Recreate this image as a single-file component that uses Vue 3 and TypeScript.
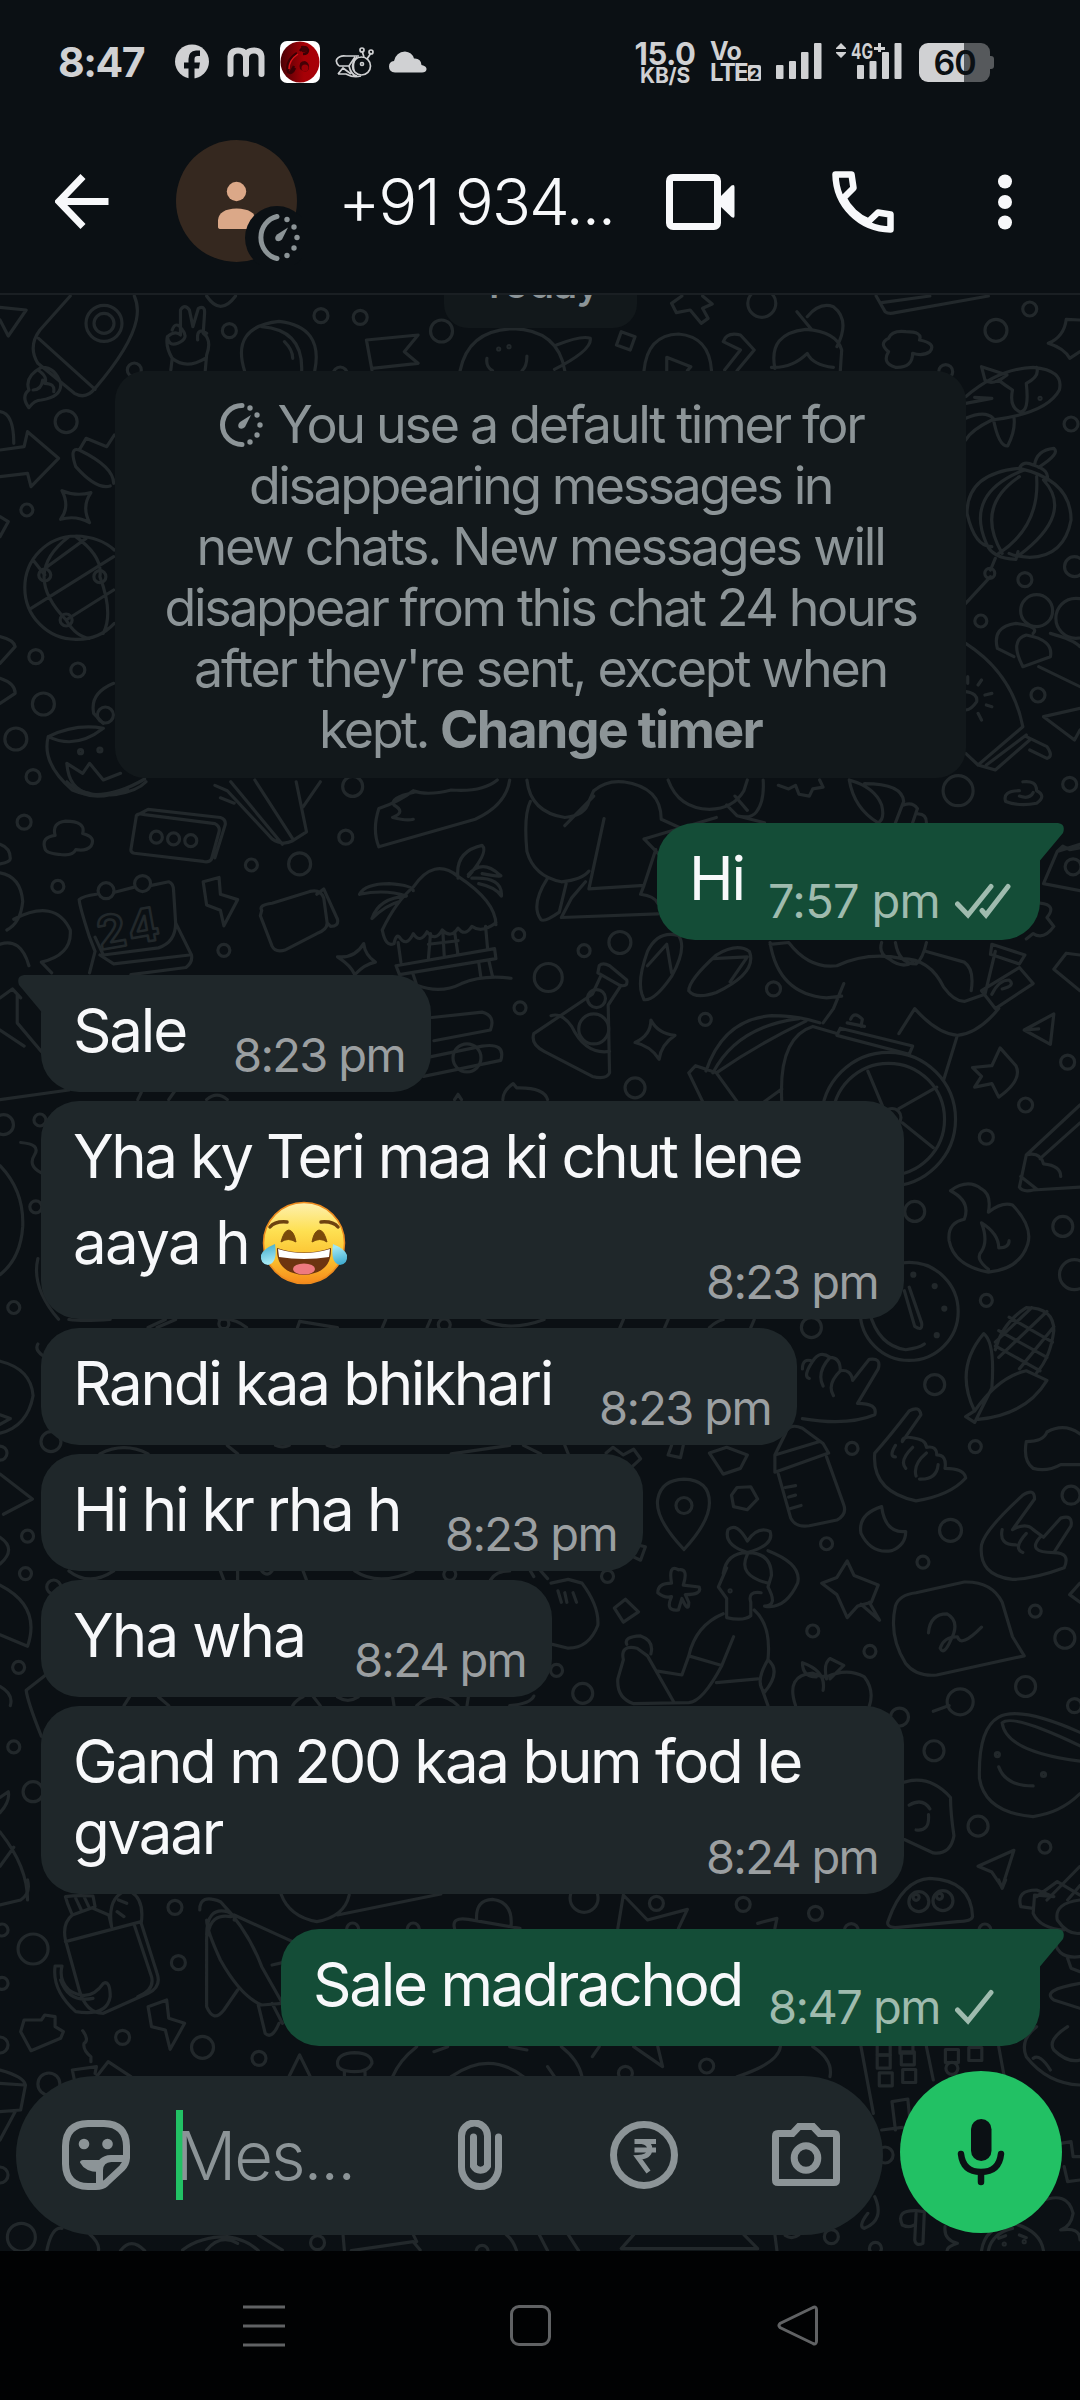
<script setup lang="ts">
interface Line { text: string; w: number; emoji?: boolean }
interface Message { out?: boolean; tail?: boolean; width: number; gap: number; lines: Line[]; time: string; ticks?: number }
type Dot = [number, number, number]
interface Sheet { y: number; sy: number; d: string; dots: Dot[] }

/* Spreads the tracking of a single-line text so that it fills the given advance width. */
const vFit = {
  mounted(el: HTMLElement, binding: { value: number }) {
    const count = (el.textContent ?? '').trim().length
    const natural = el.getBoundingClientRect().width
    if (count) el.style.letterSpacing = `${(binding.value - natural) / count}px`
  },
}

const notice: Line[] = [
  { text: 'disappearing messages in', w: 583 },
  { text: 'new chats. New messages will', w: 688 },
  { text: 'disappear from this chat 24 hours', w: 752 },
  { text: "after they're sent, except when", w: 693 },
]

const messages: Message[] = [
  { out: true, tail: true, width: 383, gap: 45, lines: [{ text: 'Hi', w: 55 }], time: '7:57 pm', ticks: 2 },
  { tail: true, width: 390, gap: 35, lines: [{ text: 'Sale', w: 113 }], time: '8:23 pm' },
  { width: 863, gap: 9, lines: [{ text: 'Yha ky Teri maa ki chut lene', w: 728 }, { text: 'aaya h', w: 176, emoji: true }], time: '8:23 pm' },
  { width: 756, gap: 9, lines: [{ text: 'Randi kaa bhikhari', w: 479 }], time: '8:23 pm' },
  { width: 602, gap: 9, lines: [{ text: 'Hi hi kr rha h', w: 327 }], time: '8:23 pm' },
  { width: 511, gap: 9, lines: [{ text: 'Yha wha', w: 232 }], time: '8:24 pm' },
  { width: 863, gap: 9, lines: [{ text: 'Gand m 200 kaa bum fod le', w: 728 }, { text: 'gvaar', w: 149 }], time: '8:24 pm' },
  { out: true, tail: true, width: 759, gap: 35, lines: [{ text: 'Sale madrachod', w: 429 }], time: '8:47 pm', ticks: 1 },
]

const SX = 0.68878
const windows: [number, number][] = [[1283, 545], [1318, 535], [1286, 598], [1320, 588], [1382, 528], [1416, 522], [1283, 505], [1316, 500]]

/* Wallpaper doodles, in four stacked sheets. */
const sheets: Sheet[] = [
  {
    y: 280, sy: 1 / 3,
    d: `M0 82L38 90L12 168L0 120 M102 48L58 150Q40 200 55 250L108 340Q125 360 138 325Q190 200 198 120Q202 80 195 48 M56 175L138 328
    M60 262Q35 290 42 330Q30 350 42 383Q50 360 60 360Q90 350 88 310Q80 260 60 262 M55 270Q70 290 65 310Q80 310 78 335 M48 330Q60 330 62 300
    M300 48Q320 110 342 48 M248 270L250 235Q240 200 243 170Q255 150 262 165L262 90Q268 70 275 90L280 140L288 85Q298 75 297 100L295 160Q308 180 300 225L298 272 M243 170Q245 200 258 190Q275 175 265 150Q255 120 250 150 M300 160Q285 140 287 180 M250 235Q270 270 298 235
    M355 272Q335 140 405 124Q470 140 457 272 M380 140Q440 150 438 272 M413 185Q425 210 425 235 M540 270L532 180L607 165L587 215L607 250L540 265
    M668 272Q680 150 745 146Q810 150 820 272 M808 195Q845 165 857 175Q860 210 805 268 M707 235Q705 260 715 272 M765 228Q765 260 758 272 M902 155L922 170L915 210L895 195Z
    M990 48L975 70L982 98L1002 90L1018 130L1028 115L1020 85L1034 72L1020 48 M935 272Q940 165 985 162Q1030 170 1033 272 M968 272L968 232L1003 260L998 272 M1052 270L1075 210L1050 185Q1055 155 1075 165L1095 210L1070 272
    M1125 265Q1115 160 1170 148Q1215 155 1222 210L1220 272 M1120 262Q1150 265 1172 220Q1180 255 1210 262 M1157 95L1178 148 M1172 110Q1190 65 1210 80Q1235 120 1215 200
    M1272 48L1285 95Q1290 103 1300 98L1435 48 M1280 68L1350 48 M1290 215Q1275 190 1290 175Q1295 150 1315 155Q1340 155 1335 180Q1360 190 1350 215Q1340 230 1325 220Q1325 265 1300 262Q1280 250 1290 215 M1568 120L1548 118Q1545 170 1522 190Q1545 205 1553 235L1568 215
    M1402 350Q1450 265 1500 262Q1545 270 1538 330Q1520 400 1440 420Q1410 450 1402 480 M1425 260L1462 285Q1440 320 1430 300Z M1402 370L1440 355L1415 352 M1505 262Q1510 290 1490 310Q1495 400 1480 395Q1465 380 1470 330Q1455 310 1450 300 M1402 415Q1430 390 1442 415Q1450 500 1463 498Q1475 450 1472 410
    M1480 565Q1404 580 1404 700Q1415 800 1440 800 M1480 565Q1555 600 1555 720Q1545 830 1495 832Q1475 830 1465 820 M1487 570Q1400 640 1432 790 M1480 590Q1415 680 1455 820 M1505 590Q1510 740 1450 820 M1515 600Q1560 700 1480 825 M1480 565Q1485 540 1500 555Q1525 570 1520 600 M1502 555Q1505 510 1530 505Q1540 520 1508 562 M1432 790Q1440 835 1475 838L1478 815 M1445 835L1438 870 M1438 890L1402 970
    M1448 1105Q1440 1040 1475 1030Q1510 1040 1500 1060 M1485 1160Q1465 1080 1490 1065Q1530 1080 1525 1130Z M1508 1160L1568 1220 M1525 1060Q1560 1080 1568 1100 M1448 1105L1472 1130
    M1402 1090Q1470 1180 1485 1340L1420 1455L1402 1420 M1432 1455L1490 1365 M1490 1370L1520 1400Q1530 1430 1520 1435L1495 1410 M1420 1455L1445 1470L1495 1380 M1402 1235Q1420 1240 1418 1265Q1410 1290 1402 1290 M1405 1190v20 M1425 1200l-5 15 M1440 1240l-10 5 M1440 1280l-8 -5 M1425 1320l-5 -20 M1568 1285L1515 1310L1560 1380L1568 1350
    M0 395Q20 400 20 490 M0 510L35 500L40 455L85 535L45 620L40 580L0 590 M166 465L155 500L125 475L115 510Q100 500 110 560Q140 630 160 618 M115 510Q165 560 165 610 M90 632Q110 650 132 638Q118 680 130 728Q110 705 88 718Q102 680 90 632Z M0 710L12 725L0 770
    M110 768A74 155 0 0 0 110 1078A74 155 0 0 0 166 1030 M110 768Q145 770 166 810 M100 770Q30 880 96 1020Q110 1070 130 1075 M62 870L125 775 M110 770Q150 830 145 890Q165 1000 150 1060 M45 985L165 830 M48 840L65 885 M96 1020L165 930
    M0 1070Q20 1080 22 1100L0 1150 M0 1195Q22 1210 22 1240L0 1270 M70 1370Q110 1330 150 1345 M70 1370Q110 1410 150 1345 M70 1370Q60 1450 105 1530Q150 1570 210 1497 M97 1450L120 1480L130 1450L150 1500L175 1480 M97 1450Q100 1530 130 1540 M165 1210Q130 1240 136 1300L150 1330`,
    dots: [[151, 130, 18], [151, 130, 10], [466, 107, 7], [523, 112, 7], [333, 152, 7], [641, 153, 11], [724, 207, 1], [739, 200, 1], [1106, 70, 14], [1446, 151, 11], [1495, 87, 7], [1510, 355, 1], [1437, 880, 5], [1488, 899, 7], [1505, 992, 16], [1424, 1023, 6], [1562, 1015, 20], [1555, 432, 7], [1560, 860, 10], [96, 425, 11], [39, 690, 6], [65, 885, 6], [145, 890, 6], [96, 1020, 6], [52, 1130, 7], [113, 1170, 7], [63, 1272, 11], [23, 1377, 11], [48, 1490, 7], [117, 1415, 2], [145, 1410, 2], [153, 1305, 8], [1507, 1245, 7], [195, 270, 7], [494, 282, 7], [1373, 275, 7]],
  },
  {
    y: 780, sy: 560 / 1568,
    d: `M97 5Q120 50 170 40Q200 30 212 5 M105 15Q130 70 185 25 M65 190Q60 160 80 155Q75 120 95 115Q125 115 120 150Q140 160 132 185Q125 200 110 195Q105 215 85 208Q65 205 65 190 M190 195L198 100Q200 92 210 97L312 122Q320 130 318 145L307 222Q303 232 295 228L195 205Q190 203 190 195 M198 100L215 82L320 105Q328 110 327 125L312 218
    M312 15L330 30L395 165Q410 185 425 170L445 145L430 5 M320 50L340 65 M335 5L410 180 M370 0L425 165 M465 5L440 75 M550 187Q540 140 550 80Q580 60 600 30Q620 45 655 28Q700 35 722 0 M740 0Q735 70 690 110L550 187 M600 35Q565 50 572 70Q590 90 570 105Q590 115 600 110
    M765 0Q770 90 820 105Q850 100 855 60L862 30Q880 0 905 5Q960 20 960 110L1000 145 M770 60Q760 100 765 200Q775 270 815 285Q845 280 855 255 M820 128L862 45 M877 108L855 305L935 295L930 320Q950 325 955 345 M935 165L1040 105 M935 165L955 205 M952 195L935 295 M850 285L830 330L815 385L955 375 M822 290L812 370Q790 400 785 390Q770 350 795 275 M1070 100L1110 120
    M970 0Q985 80 1030 82Q1065 80 1080 30L1085 0 M1055 70L1070 100Q1090 110 1098 90Q1110 60 1108 0 M1067 45L1085 85 M1130 15L1145 25L1155 15L1160 40L1175 45L1180 25L1195 20L1190 0 M1233 0Q1240 80 1275 120 M1233 0Q1270 20 1280 70Q1285 110 1275 120 M1255 10Q1310 10 1312 60L1300 120 M1312 70Q1325 60 1332 80L1325 120 M1333 95Q1345 95 1345 120
    M1480 30Q1455 30 1460 60Q1480 75 1505 65Q1520 45 1505 30Q1505 0 1485 5 M1480 45Q1495 55 1500 35 M522 320Q530 290 565 290Q600 295 600 310 M522 320Q560 305 590 325Q550 330 540 388Q560 350 580 340 M555 420Q575 340 600 300Q630 215 665 270Q720 340 720 405 M555 420Q560 470 572 458Q575 430 580 440Q590 470 600 430Q610 460 620 425Q632 455 642 420Q655 445 665 415Q675 440 685 410Q700 430 720 400
    M665 275Q660 200 700 183Q710 200 680 270 M680 265Q700 220 725 265Q735 275 700 262 M685 275Q730 270 728 325Q720 300 695 290 M578 455L582 510 M705 410L708 475 M625 430L622 500 M660 425L665 490 M643 425L645 495 M622 460L665 450 M575 520L718 472L720 500L580 545Z M695 510L698 550 M710 508L715 550 M600 545L605 575Q640 600 670 570Q700 545 742 555
    M115 335Q115 350 130 440L138 480L130 540 M115 335Q120 325 140 320 M165 315L195 300 M220 295L245 285Q252 290 252 310L255 400L278 490Q280 510 270 525L190 545 M145 490L165 515L275 490 M138 440L150 490L230 470Q255 455 255 400 M295 285L318 273L320 320L345 335L325 408L320 365L300 350Z M380 365Q375 350 395 345L450 312Q465 305 470 330L475 400Q475 420 460 430L415 475Q400 485 395 465L378 380Z M460 320L470 305L490 390Q492 410 480 410L475 400
    M528 458Q515 500 490 495Q510 520 515 545Q530 515 545 510Q530 490 528 458 M0 180Q15 190 15 220Q15 230 0 235 M0 260Q30 270 33 340Q30 400 10 420 M20 390Q80 330 102 420Q105 490 60 510L75 540 M0 460Q30 440 42 520 M0 610L18 585L30 610 M25 600L25 680L60 760 M0 700L35 745
    M932 600Q925 560 940 480Q955 420 985 435Q998 470 975 550Q950 620 935 615Z M940 520L968 460L975 540 M1000 590Q1000 560 1040 490Q1070 455 1088 480Q1100 540 1040 595Q1010 615 1000 590 M1035 500L1085 495L1060 565 M870 520Q875 510 885 520L910 560Q912 580 900 575L868 540Z M872 550L860 600L775 710Q770 740 790 760L860 830Q880 840 885 820L883 630L900 580 M800 660Q815 650 830 690Q850 770 885 760 M945 672Q955 710 980 715Q960 740 957 782Q945 745 922 735Q945 715 945 672Z
    M1118 455Q1130 600 1200 610L1222 605 M1225 570L1210 640L1195 680 M1118 460L1145 455Q1175 530 1215 520Q1260 480 1310 500Q1350 500 1370 580Q1385 620 1400 620L1430 600L1445 480 M1305 710L1328 640Q1360 710 1390 715Q1420 710 1450 640 M1390 715L1370 840 M1300 455Q1305 515 1330 515Q1340 500 1345 455 M1280 455Q1275 485 1290 500Q1310 530 1325 510 M1440 460L1488 490L1480 515L1438 488Z M1425 590L1480 525L1500 570L1445 640Z M1440 600Q1450 560 1465 560Q1475 575 1455 585 M1345 480L1400 510Q1415 530 1410 590
    M1260 815L1285 930 M1360 860L1305 920 M1355 1030L1310 960 M1220 695L1325 745L1320 768L1215 715Z M1230 680L1255 690 M1235 670Q1240 645 1252 670L1250 690 M1025 815Q1050 670 1120 660Q1160 660 1190 680 M1035 820Q1070 690 1160 668 M1000 820L1010 800L1040 820Q1100 740 1170 675 M1135 900Q1130 720 1180 690L1215 710 M1000 820L1020 900 M1040 820L1070 900 M1135 865L1110 900
    M1487 700L1530 655L1525 740Z M1487 700L1508 697 M1452 750L1475 800Q1485 840 1450 888L1440 850L1415 860L1425 830L1412 805L1440 800Z M1568 910L1490 1050L1480 1140Q1485 1155 1500 1148L1568 1140 M1490 1050Q1510 1040 1515 1075Q1540 1080 1540 1110 M1568 960L1510 1060 M1482 1110L1505 1145
    M1380 1150Q1405 1115 1425 1145Q1440 1160 1435 1210Q1455 1180 1470 1190Q1500 1250 1492 1300Q1480 1370 1435 1378Q1385 1360 1378 1290Q1375 1240 1400 1230Q1410 1180 1380 1150 M1435 1370Q1415 1340 1425 1320Q1435 1290 1425 1240Q1450 1270 1450 1310Q1465 1310 1465 1290 M1313 1430L1328 1530Q1340 1545 1338 1520L1320 1420
    M0 1080Q35 1150 33 1250Q30 1340 0 1385 M0 895L100 868 M55 1340Q45 1420 85 1510 M30 1015Q60 1020 50 1050Q40 1080 60 1100 M627 665L700 650Q720 660 712 700L630 730 M612 780L700 745Q735 735 727 785L615 830 M730 895Q730 870 745 850L750 862Q790 860 795 895 M660 895l5 -15l5 15
    M1515 290L1568 310 M1515 290L1535 200L1568 180 M1535 200l8 -15l10 10l15 -5 M1530 530L1548 485L1568 490 M1530 530L1568 590 M1510 345Q1535 350 1520 385L1530 410Q1515 450 1500 430L1490 445 M300 895Q315 870 330 895 M245 895l8 -22 M200 895l5 -20`,
    dots: [[35, 118, 7], [227, 160, 6], [252, 165, 6], [277, 170, 6], [512, 18, 10], [502, 160, 7], [1391, 30, 15], [154, 310, 8], [207, 290, 8], [365, 238, 6], [435, 235, 11], [84, 298, 6], [325, 477, 6], [753, 433, 6], [848, 478, 6], [900, 455, 11], [796, 553, 14], [755, 638, 6], [1123, 585, 7], [1024, 670, 6], [922, 862, 10], [866, 612, 9], [862, 697, 15], [1290, 950, 67], [1290, 950, 56], [1295, 945, 9], [1550, 790, 7], [1489, 910, 7], [1432, 1000, 7], [1328, 1208, 10], [1543, 1250, 10], [1560, 1385, 15], [1432, 1457, 6], [1320, 1488, 49], [5, 965, 10], [58, 952, 6], [52, 1195, 6], [20, 1477, 6], [678, 778, 14], [1326, 1385, 1.5], [1357, 1417, 1.5], [1371, 1480, 1.5], [1553, 12, 7], [1558, 243, 8]],
  },
  {
    y: 1300, sy: 600 / 1568,
    d: `M1262 30Q1275 120 1315 130Q1335 125 1342 115 M1415 290Q1385 180 1428 88Q1445 110 1440 230L1415 320L1402 305L1415 290Q1450 200 1490 185L1520 210Q1490 300 1420 312 M1445 130Q1455 60 1490 20Q1530 20 1530 80Q1525 150 1505 190 M1450 80L1520 150 M1445 120L1510 185 M1465 45L1528 110 M1520 30L1450 150 M1530 70L1480 180 M1498 20L1445 110
    M1165 180Q1165 150 1180 160Q1190 130 1205 150Q1220 150 1220 185Q1235 180 1238 210L1262 155Q1280 150 1275 180L1245 270Q1275 270 1270 300Q1230 330 1165 310 M1180 160Q1165 200 1175 205 M1205 150Q1185 190 1195 225 M1220 185Q1200 220 1210 250 M1320 290Q1335 275 1337 300L1310 370Q1310 355 1325 360Q1345 365 1345 385Q1360 380 1360 405Q1375 405 1372 440Q1400 440 1402 465Q1380 510 1330 525Q1265 500 1270 400Q1290 360 1320 290 M1300 380Q1290 410 1300 410 M1325 385Q1305 420 1315 440 M1345 400Q1325 430 1330 460 M1362 430Q1360 470 1335 468
    M1485 510Q1502 490 1502 520L1470 600Q1490 580 1500 600L1515 620L1540 570Q1558 560 1555 590L1530 660Q1555 660 1545 700Q1500 730 1470 730Q1420 720 1425 640Q1430 600 1485 510 M1455 600Q1450 640 1475 640 M1490 610Q1470 650 1485 660 M1510 620Q1490 660 1530 660 M1568 350Q1545 320 1520 345Q1515 370 1490 370Q1485 420 1500 440Q1520 450 1540 430L1568 430
    M1140 350Q1145 320 1165 335L1195 375L1203 400L1125 450L1125 405L1140 350 M1125 405L1190 370 M1130 455L1148 570Q1155 595 1175 590L1215 575Q1230 560 1225 535L1200 410 M1140 490L1155 485 M1145 515l10 -5 M1148 545l15 -8 M993 652Q950 570 955 520Q960 470 993 468Q1030 470 1030 530Q1030 580 993 652 M1070 490L1090 488L1100 520L1085 548L1065 540L1062 510Z M1055 385L1085 405L1075 440L1050 455L1030 400Z M975 380L970 405L988 412L992 380 M880 400L890 385L905 405L920 390L930 415L915 440 M908 782L927 815L905 842L892 805Z
    M1280 540Q1245 560 1250 610Q1265 665 1295 655Q1315 640 1315 605Q1285 610 1280 540 M985 705Q970 690 975 740Q955 740 955 765Q965 780 975 775Q965 815 985 810L990 780Q1000 820 1000 790L995 770Q1020 770 1015 750L992 745Q1000 700 985 705
    M1085 660Q1050 640 1057 600Q1070 580 1085 630Q1100 590 1118 605Q1125 640 1085 660 M1050 715Q1055 660 1085 660Q1120 660 1120 720L1115 750Q1130 800 1110 800 M1055 700L1043 750L1055 780L1055 830Q1080 840 1090 825L1090 790 M1085 665Q1070 720 1115 740 M1115 655Q1165 690 1158 740Q1140 810 1110 800 M1090 790Q1085 760 1105 765 M1050 820Q1010 850 1000 930L1048 955L1065 880 M1095 810Q1120 850 1115 940 M1040 1000L1100 990 M1115 940Q1135 970 1110 1025Q1095 1000 1115 940 M1000 930L990 980L955 970 M1048 955Q1020 1050 1000 1052L920 1055Q895 1040 897 990L905 940Q900 900 925 910L940 930L978 1050 M910 900Q905 880 930 878Q950 890 945 925 M1105 1010L1115 1060
    M1230 682L1240 720L1275 745L1265 790L1245 800L1230 830L1215 770L1193 740L1215 725Z M1250 795L1277 837L1262 790 M1300 800Q1305 770 1330 765L1400 737Q1440 735 1455 790L1470 880L1487 930L1360 980Q1330 985 1315 950Q1290 880 1300 800 M1348 870Q1350 820 1375 820Q1395 840 1380 890Q1370 930 1365 910Q1370 880 1390 880Q1395 910 1425 855 M1355 1075L1378 1060 M1155 1060Q1140 980 1180 975Q1190 985 1200 985Q1230 960 1255 985Q1270 1020 1262 1062 M1195 1020Q1200 970 1165 948Q1165 985 1185 985 M1200 990Q1195 950 1205 937L1225 955L1205 990
    M1450 1090Q1420 1120 1422 1250Q1430 1340 1500 1350Q1540 1340 1568 1290 M1450 1090Q1480 1060 1568 1130 M1455 1105Q1470 1080 1568 1165 M1455 1105Q1460 1180 1568 1205 M1450 1220Q1460 1270 1500 1270 M1313 1260Q1350 1240 1380 1300Q1380 1340 1385 1400Q1380 1450 1355 1445L1313 1410 M1320 1320Q1340 1300 1350 1330 M1330 1385Q1350 1390 1348 1345 M1472 1438L1420 1480L1440 1495L1455 1535Z M1568 1480L1520 1568 M1568 1530L1550 1568 M1568 790L1553 770L1568 740
    M800 740L825 730L845 740Q870 800 868 850Q855 910 825 910L802 900 M810 760l5 30 M820 765l3 25 M832 765l5 25 M712 732Q720 708 740 708 M770 708l5 15 M785 708l10 20 M925 640L937 645L930 680L918 670 M0 160Q45 180 48 250Q40 330 0 348 M0 300l15 10l-15 15 M0 455L47 520L5 560 M0 620Q25 650 0 690 M0 745Q60 800 40 905L0 875 M60 1140Q40 1050 38 1020L70 975 M0 1010Q20 1030 15 1060 M0 1300L12 1285Q15 1310 0 1340 M0 1390Q40 1480 40 1568 M0 1480L20 1430 M62 145Q50 130 55 115
    M100 51Q120 56 160 51 M215 72L240 51 M228 72L255 51 M318 51Q340 45 358 72 M435 56L432 72 M435 56L490 72 M560 51L555 72 M620 72L625 51 M700 51Q740 85 790 51 M905 51L900 72 M965 72L970 51 M1030 72Q1040 55 1050 51 M1095 51L1090 72 M145 402Q180 370 215 402 M330 380L345 402 M400 380Q410 388 420 380 M475 380Q485 388 492 380 M655 402L740 380 M760 380L785 402 M820 380L825 402 M100 708Q130 750 165 708 M320 708L325 732 M345 708L345 732 M380 708Q388 725 395 708 M440 708L445 732 M515 708Q550 750 600 708 M180 1060L188 1037 M230 1037L245 1060 M425 1060Q430 1045 440 1037 M455 1037L465 1060 M490 1037Q505 1055 520 1037 M570 1037L572 1060 M605 1060Q635 1010 665 1060 M680 1037L678 1060 M740 1060Q770 1055 775 1035`,
    dots: [[1178, 72, 10], [1357, 221, 10], [1416, 383, 6], [1237, 388, 6], [1380, 602, 11], [1200, 637, 6], [1340, 685, 6], [1180, 865, 6], [1263, 918, 6], [1503, 813, 6], [1489, 1010, 10], [1546, 884, 10], [1394, 1050, 13], [1555, 510, 9], [1306, 1090, 9], [1356, 1178, 10], [1420, 1375, 10], [1517, 1430, 6], [40, 617, 6], [37, 715, 6], [27, 960, 6], [20, 1168, 6], [48, 1285, 10], [74, 370, 10], [846, 1028, 10], [808, 968, 6], [882, 722, 6], [653, 717, 6], [993, 537, 8], [1448, 1188, 2], [1515, 1240, 2], [1360, 92, 1.5], [1060, 760, 1], [0, 400, 7], [78, 750, 7], [325, 62, 5], [645, 65, 6], [1560, 1060, 7]],
  },
  {
    y: 1880, sy: 1 / 3,
    d: `M0 75L30 60Q45 40 40 0 M98 70L95 50Q110 45 135 48L138 80L105 105Z M110 55L118 90 M122 50L130 85 M105 105Q90 130 95 180L115 330Q125 400 150 400L215 340Q235 320 228 280L205 130Q210 60 190 35 M135 85L158 105L162 140 M95 185L205 125 M162 140Q155 50 185 30 M170 95l10 15 M172 60l12 10 M195 135L220 290Q225 330 200 350
    M80 258Q75 330 110 395Q155 410 160 350Q160 300 150 310Q130 370 100 330Q85 300 90 258Z M88 300Q100 370 135 355 M290 90Q290 40 320 65Q360 150 380 260L410 370L380 375Q350 350 320 240Q300 150 300 120 M300 165Q300 80 330 95Q345 110 340 120 M302 165Q305 100 335 110 M340 105L425 185 M300 170L300 380Q310 430 325 390L345 330 M395 255L410 248 M375 375L385 460Q395 480 405 430 M395 370L410 430
    M215 380L242 360L245 415L268 430L247 508L240 450L220 440Z M30 455L35 420L60 420L65 405L80 410L80 440L92 455L88 475L45 512Z M120 452Q130 480 122 490Q120 510 132 530L132 545 M408 42Q420 110 460 125Q500 110 507 45 M490 105L640 42 M660 145Q655 110 680 118L755 145 M692 120Q690 60 715 58Q745 65 742 140 M897 145L905 45L940 120L998 88L985 145 M1100 130L1128 115L1125 145
    M1290 120Q1310 0 1350 -5Q1410 0 1412 110Q1410 125 1390 125L1300 143Q1285 140 1290 120 M1450 0l5 25l5 -25 M1482 80Q1475 30 1505 30L1530 50 M1482 80L1500 85 M1530 50L1502 45L1500 100Q1510 145 1545 150 M1505 50L1535 5L1568 45 M1568 60Q1530 70 1535 120Q1550 165 1568 160 M1530 160Q1530 240 1568 230 M1550 235L1555 265L1568 275 M1568 310Q1510 330 1530 360L1568 385 M1550 440Q1520 480 1530 510Q1550 550 1568 540 M1505 440Q1480 480 1490 530Q1520 610 1568 615 M1500 535Q1510 520 1525 570
    M1250 500L1268 700 M1345 500L1355 600 M1450 500L1458 590 M1300 750L1295 665L1318 657L1322 740 M1280 750L1310 742 M860 530L870 500 M920 500L962 560L955 500 M1070 590Q1130 550 1133 500 M1180 500Q1210 540 1205 590 M570 590Q580 540 605 500 M815 500Q840 540 845 590 M655 590Q710 510 760 590 M630 515L650 500 M795 560L805 590 M740 500l25 10 M490 550Q490 520 515 518Q540 520 540 550Q535 575 515 575Q490 575 490 550 M500 575L500 590 M530 575L530 590 M420 588L435 525L450 588
    M108 600L105 570L140 560L138 580 M140 590L157 545L190 590 M0 570Q35 590 37 615L30 690L0 695 M0 610L35 615 M0 780L22 695 M68 1112Q75 1040 90 1045 M130 1062Q145 1090 143 1112 M175 1112Q190 1070 210 1112 M265 1110Q290 1070 330 1070Q360 1080 375 1112 M300 1110Q320 1060 345 1090 M375 1065L410 1110 M498 1064L500 1112 M510 1112L600 1085L610 1110 M600 1064L605 1085 M735 1064Q745 1080 750 1112 M783 1064L795 1112 M825 1064L840 1112 M920 1064L902 1106L1100 1106L1080 1064 M1125 1064L1128 1112 M1140 1066Q1150 1080 1160 1064
    M1270 950Q1285 1020 1255 1045Q1245 1040 1260 1000 M1310 1035Q1300 990 1330 992L1342 995L1340 1090Q1330 1100 1328 1080L1330 1000 M1310 1035Q1320 1045 1327 1035 M1372 1040Q1370 1080 1390 1090Q1375 1100 1375 1112 M1425 1112Q1430 1040 1470 1030Q1510 1050 1515 1112 M1435 1112Q1440 1060 1470 1045 M1450 1075l10 -8 M1480 1065l10 8 M1510 965Q1550 930 1558 1000Q1555 1040 1540 1050Q1568 1040 1568 1080 M1540 790L1555 785L1558 830L1568 830 M1545 860L1550 905L1568 900`,
    dots: [[254, 82, 7], [48, 207, 15], [259, 248, 7], [178, 472, 7], [294, 502, 11], [376, 535, 7], [71, 612, 11], [848, 55, 14], [953, 70, 7], [1079, 73, 7], [1184, 100, 7], [1026, 558, 7], [908, 580, 7], [3, 150, 6], [3, 310, 6], [0, 495, 8], [0, 885, 8], [31, 1072, 14], [461, 1088, 7], [1207, 1070, 7], [1285, 825, 8], [700, 1114, 6], [512, 147, 6], [600, 147, 6], [1236, 152, 7], [1430, 150, 6], [1334, 65, 10], [1369, 62, 10], [1330, 52, 3], [1364, 49, 3], [1458, 1092, 1], [1487, 1085, 1], [1271, 1105, 6], [1382, 565, 6]],
  },
]
</script>

<template>
  <div class="phone">
    <div class="status">
      <span v-fit="86" class="clock">8:47</span>
      <svg class="fb" width="34" height="36" viewBox="0 0 34 36"><circle cx="17" cy="17.500" r="17" /><path class="cut" d="M13.500 36V24.500H9V18.500H13.500V15Q13.500 7 21 6.500H25V12H22.500Q19.500 12 19.500 15V18.500H25L24 24.500H19.500V36Z" /></svg>
      <svg class="em" width="38" height="30" viewBox="0 0 38 30"><path d="M3.500 27V11Q3.500 3.500 11 3.500Q19 3.500 19 11V27M19 11Q19 3.500 27 3.500Q34.500 3.500 34.500 11V27" /></svg>
      <svg class="dial" width="40" height="42" viewBox="0 0 40 42">
        <defs><linearGradient id="red"><stop offset="0" stop-color="#4a0005" /><stop offset=".6" stop-color="#a60006" /><stop offset="1" stop-color="#a80008" /></linearGradient></defs>
        <rect width="40" height="42" rx="7" fill="#fff" /><ellipse cx="20" cy="21" rx="19.500" ry="20.500" fill="url(#red)" />
        <path d="M20 10Q25 3 28 9Q28 13 23 13M10 32L14 25M17 12Q5 20 8 31Q12 34 15 27" fill="none" stroke="#3a0004" stroke-width="2.500" /><path d="M18 13Q9 19 9 28" stroke="#d8141a" fill="none" stroke-width="1.500" /><path d="M21 5Q26 4 28 8Q27 12 22 11ZM20 28Q18 20 25 20Q30 22 29 28Q26 33 20 28Z" fill="#450005" /><circle cx="25" cy="27" r="3.500" fill="#9c0007" />
      </svg>
      <svg class="bee" width="39" height="32" viewBox="0 0 39 32"><path d="M4 19Q0 15 2 12Q5 8 11 9H24M4 19H14L20 10M14 19Q16 28 22 29M3 27L8 21L16 27M3 27H11Q18 31 26 29M22 10Q17 15 19 24M29 10L27 4M32 12L36 6" /><circle cx="26.500" cy="19" r="9" /><circle cx="27" cy="3" r="2" /><circle cx="36" cy="5" r="2" /><circle cx="27" cy="17" r="1.500" /></svg>
      <svg class="cloud" width="38" height="22" viewBox="0 0 38 22"><path d="M6 21.500Q0 21 0 15.500Q0 10.500 5 10Q7 1 16 .5Q23 1 25 7.500Q32 7 32.500 14Q38 15 37.500 18.500Q37 21.500 33 21.500Z" /></svg>
      <div class="rate"><span v-fit="61" class="big">15.0</span><span v-fit="50" class="small">KB/S</span></div>
      <div class="volte"><span v-fit="31" class="vo">Vo</span><div class="lte"><span v-fit="37">LTE</span><b>2</b></div></div>
      <svg class="bars" width="46" height="38" viewBox="0 0 46 38"><rect y="22" width="7.500" height="14" rx="1" /><rect x="13" y="18" width="7" height="18" rx="1" /><rect x="25" y="9" width="7.500" height="27" rx="1" /><rect x="38" width="7.500" height="36" rx="1" /></svg>
      <svg class="bars two" width="66" height="38" viewBox="0 0 66 38"><path d="M5 0L10 5H0ZM5 15L10 10H0ZM0 5H10V6H0ZM0 9H10V10H0Z" /><text x="15" y="15.500" textLength="22" lengthAdjust="spacingAndGlyphs">4G</text><path d="M38 4H42V0H45V4H49V7H45V9H42V7H38Z" /><rect x="21" y="22" width="7" height="14" rx="1" /><rect x="33.500" y="18" width="7" height="18" rx="1" /><rect x="46" y="9" width="7" height="27" rx="1" /><rect x="58.500" width="7" height="36" rx="1" /></svg>
      <div class="battery"><span v-fit="42">60</span></div><i class="nub"></i>
    </div>

    <header class="bar">
      <svg class="back" width="54" height="56" viewBox="0 0 54 56"><path d="M53.500 27.500H6M28 2.500L4 27.500L28 52.500" /></svg>
      <svg class="avatar" width="126" height="126" viewBox="0 0 126 126">
        <ellipse cx="60.500" cy="62" rx="60.500" ry="61" fill="#35281f" />
        <circle cx="60.500" cy="52.500" r="9.700" fill="#dba888" /><path d="M42 88V81Q43 70 60.500 69.500Q79 70 80 81V88Q80 90 77 90H45Q42 90 42 88Z" fill="#dba888" />
        <circle cx="101" cy="99" r="32" fill="#0b1014" />
        <g transform="translate(101 98.500)"><path d="M0 -21A20.500 21.500 0 0 0 0 21" class="ring" /><path d="M11 -10L5 2Q2 5 -1 3Q-3 0 0 -3Z" class="dot" /><circle cx="10" cy="-18" r="2.700" class="dot" /><circle cx="17" cy="-10.500" r="2.700" class="dot" /><circle cx="20" cy="0" r="2.700" class="dot" /><circle cx="17" cy="10.500" r="2.700" class="dot" /><circle cx="10" cy="18" r="2.700" class="dot" /></g>
      </svg>
      <span v-fit="276" class="name">+91 934...</span>
      <svg class="video" width="70" height="56" viewBox="0 0 70 56"><rect x="3.500" y="3.500" width="48" height="49" rx="3.500" /><path d="M53 24L65.500 11.500Q68.500 10 68.500 13V42Q68.500 45 65.500 43L53 31Z" /></svg>
      <svg class="call" width="62" height="62" viewBox="0 0 62 62"><path d="M3.500 3.500H19.500L21.500 17L11.500 27C16 37 26 46.500 36.500 50.500L46 41.500L58.500 43.500V58.500C28 58 4 34 3.500 3.500Z" /></svg>
      <svg class="more" width="16" height="58" viewBox="0 0 16 58"><circle cx="8" cy="8.500" r="7" /><circle cx="8" cy="29" r="7" /><circle cx="8" cy="49.500" r="7" /></svg>
    </header>

    <main class="chat">
      <svg class="wall" width="1080" height="1957" viewBox="0 294 1080 1957">
        <g v-for="s in sheets" :key="s.y">
          <path :d="s.d" :transform="`translate(0 ${s.y}) scale(${SX} ${s.sy})`" />
          <circle v-for="(c, i) in s.dots" :key="i" :cx="c[0] * SX" :cy="s.y + c[1] * s.sy" :r="c[2]" />
        </g>
        <rect v-for="(w, i) in windows" :key="'w' + i" :x="w[0] * SX - 6.5" :y="1880 + w[1] / 3 - 6.5" width="13" height="13" />
        <text x="100" y="950" transform="rotate(-10 100 950)">24</text>
      </svg>
      <div class="today"><span v-fit="119">Today</span></div>
      <section class="notice">
        <p><svg width="46" height="46" viewBox="-23 -23 46 46"><path d="M1 -19.500A19.500 19.500 0 0 0 1 19.500" class="ring" /><path d="M10 -10L4 2Q1 5 -2 3Q-4 0 -1 -3Z" class="dot" /><circle cx="9" cy="-17" r="2.700" class="dot" /><circle cx="16" cy="-10" r="2.700" class="dot" /><circle cx="19" cy="0" r="2.700" class="dot" /><circle cx="16" cy="10" r="2.700" class="dot" /><circle cx="9" cy="17" r="2.700" class="dot" /></svg><span v-fit="586">You use a default timer for</span></p>
        <p v-for="l in notice" :key="l.text"><span v-fit="l.w">{{ l.text }}</span></p>
        <p><span v-fit="109">kept.</span><strong v-fit="322">Change timer</strong></p>
      </section>

      <article v-for="(m, i) in messages" :key="i" class="bubble" :class="{ out: m.out, tail: m.tail }" :style="{ width: m.width + 'px', marginTop: m.gap + 'px' }">
        <svg v-if="m.tail" class="spike" width="62" height="38" viewBox="0 0 62 38"><path d="M0 0H56Q64 1 61 10L38 37.500V38H0Z" /></svg>
        <div class="body">
          <div v-for="l in m.lines" :key="l.text" class="line" :class="{ tall: l.emoji }">
            <span v-fit="l.w">{{ l.text }}</span>
            <svg v-if="l.emoji" class="joy" width="88" height="84" viewBox="0 0 88 84">
              <defs>
                <linearGradient id="face" x2="0" y2="1"><stop offset="0" stop-color="#fdf0b0" /><stop offset=".35" stop-color="#fee052" /><stop offset=".7" stop-color="#fbc02d" /><stop offset="1" stop-color="#f68a1c" /></linearGradient>
                <linearGradient id="tear" x2="1" y2="1"><stop offset="0" stop-color="#3fa9c9" /><stop offset=".5" stop-color="#a4e9f5" /><stop offset="1" stop-color="#35a5cc" /></linearGradient>
              </defs>
              <circle cx="44" cy="42" r="40.500" fill="url(#face)" stroke="#ee8b1e" stroke-width="1.500" />
              <path d="M10 26Q15 20 27 21M78 26Q73 20 61 21" fill="none" stroke="#6d4310" stroke-width="3.500" stroke-linecap="round" />
              <path d="M21 41Q24 29 29 29Q34 30 36 41Q28 36 21 41ZM52 41Q54 30 59 29Q64 29 67 41Q60 36 52 41Z" fill="#7a4a0b" stroke="#7a4a0b" />
              <path d="M17 47Q44 56 71 47Q72 72 44 74Q16 72 17 47Z" fill="#6d3410" /><path d="M18 48Q44 56 70 48L69 56Q44 60 19 56Z" fill="#fff" /><ellipse cx="44" cy="68" rx="11" ry="5.500" fill="#ee7a80" />
              <path d="M15 43Q18 62 8 64Q0 63 1 54Q3 48 15 43ZM73 43Q70 62 80 64Q88 63 87 54Q85 48 73 43Z" fill="url(#tear)" />
            </svg>
          </div>
        </div>
        <div class="meta">
          <span v-fit="172">{{ m.time }}</span>
          <svg v-if="m.ticks" class="ticks" width="56" height="36" viewBox="0 0 56 36"><path v-if="m.ticks === 2" d="M2.500 21L13 32L36 3.500M27 27.500L31 32L53 3.500" /><path v-else d="M2.500 21L13 32L36 3.500" /></svg>
        </div>
      </article>

      <footer class="composer">
        <div class="field">
          <svg class="smile" width="68" height="70" viewBox="0 0 68 70">
            <path d="M26 3.500H42Q64 4 64.500 26V38Q64 44 60 48L44 63Q40 66.500 34 66.500H26Q4 66 3.500 44V26Q4 4 26 3.500Z" /><path d="M37.500 64V50Q38 39 49 38.500H64" />
            <circle class="solid" cx="22" cy="24" r="5.300" /><circle class="solid" cx="45.500" cy="24" r="5.300" /><path class="solid" d="M18 42.500Q18 40 21 40H42Q37 45 37 52Q23 52 18 42.500Z" />
          </svg>
          <div class="entry"><i></i><span v-fit="178">Mes...</span></div>
          <svg class="clip" width="44" height="70" viewBox="0 0 44 70"><path d="M40.500 17V47A18.500 19.500 0 0 1 3.500 47V16A13 13 0 0 1 29.500 16V46A8 8 0 0 1 15.500 46V17" /></svg>
          <svg class="rupee" width="68" height="70" viewBox="0 0 68 70"><circle cx="34" cy="35" r="30.500" /><path d="M24.500 21.500H46M24.500 30H46M26 21.500H32Q40 23 40 30Q39 37 28 37.500L38.500 52" /></svg>
          <svg class="camera" width="68" height="63" viewBox="0 0 68 63"><path d="M6 10.500H20.500L27 3.500H41L47.500 10.500H62Q64.500 10.500 64.500 13V57Q64.500 59.500 62 59.500H6Q3.500 59.500 3.500 57V13Q3.500 10.500 6 10.500Z" /><ellipse cx="34" cy="35" rx="11.800" ry="12.300" /></svg>
        </div>
        <div class="mic"><svg width="48" height="68" viewBox="0 0 48 68"><rect x="14" y="1" width="20.500" height="42" rx="10.250" /><path d="M4 36Q6 54 24 54Q42 54 44 36M24 54V64" /></svg></div>
      </footer>
    </main>

    <nav class="nav">
      <svg width="42" height="42" viewBox="0 0 42 42"><path d="M0 2H42M0 21H42M0 40H42" /></svg>
      <svg width="42" height="42" viewBox="0 0 42 42"><rect x="1.500" y="1.500" width="38" height="38" rx="7.500" /></svg>
      <svg width="42" height="42" viewBox="0 0 42 42"><path d="M36 2.500L3 18.500Q1 20.500 3 22.500L36 38.500Q39.500 40 39.500 36V5Q39.500 1 36 2.500Z" /></svg>
    </nav>
  </div>
</template>

<style>
body { background: #000; }
</style>
<style scoped>
.phone { width: 1080px; height: 2400px; overflow: hidden; display: flex; flex-direction: column; background: #0b1014; color: #f7f8fa; font-family: Inter, "Liberation Sans", sans-serif; font-weight: 400; }
svg { flex: none; display: block; }
span, strong { display: inline-block; white-space: nowrap; flex: none; }
.status { height: 124px; box-sizing: border-box; padding-left: 58px; display: flex; align-items: center; color: #d0d1d3; fill: #d0d1d3; font-weight: 700; }
.clock { font-size: 41px; }
.fb { margin-left: 31px; } .cut { fill: #0b1014; }
.em { margin-left: 18px; } .em path { fill: none; stroke: #d0d1d3; stroke-width: 6; stroke-linecap: round; }
.dial { margin-left: 15px; } .bee { margin: 2px 0 0 15px; fill: none; stroke: #d0d1d3; stroke-width: 1.700; } .cloud { margin-left: 15px; }
.rate { margin-left: 207px; width: 62px; display: flex; flex-direction: column; align-items: center; }
.big { font-size: 31px; line-height: 26px; margin-top: 1px; } .small { font-size: 21px; line-height: 18px; }
.volte { margin-left: 14px; width: 55px; display: flex; flex-direction: column; align-items: flex-start; }
.vo { font-size: 25px; line-height: 22px; } .lte { display: flex; align-items: center; font-size: 24px; line-height: 22px; }
.lte b { width: 13px; height: 16px; line-height: 17px; margin-left: 1px; border-radius: 2px; background: #d0d1d3; color: #0b1014; font-size: 14px; text-align: center; }
.bars { margin-left: 11px; } .two { margin-left: 14px; } .bars text { font-size: 21px; font-weight: 700; }
.battery { width: 71px; height: 39px; margin-left: 17px; border-radius: 9px; background: linear-gradient(90deg, #d0d1d3 45px, #56595c 45px); color: #0b1014; font-size: 34px; line-height: 39px; text-align: center; font-weight: 600; }
.nub { width: 4px; height: 13px; background: #56595c; border-radius: 0 3px 3px 0; }
.bar { height: 171px; box-sizing: border-box; padding: 0 0 13px 55px; display: flex; align-items: center; border-bottom: 2px solid #1a1f23; position: relative; z-index: 2; background: #0b1014; }
.back path { fill: none; stroke: #f7f8fa; stroke-width: 7; }
.avatar { margin-left: 67px; }
.ring { fill: none; stroke: #8c9497; stroke-width: 5; stroke-linecap: round; } .dot { fill: #8c9497; }
.name { margin: 0 3px 0 36px; font-size: 65px; font-weight: 300; line-height: 80px; }
.video { margin-left: 49px; stroke: #f7f8fa; stroke-width: 7; fill: none; } .video path { stroke: none; fill: #f7f8fa; }
.call { margin-left: 96px; stroke: #f7f8fa; stroke-width: 6.500; stroke-linejoin: round; fill: none; }
.more { margin-left: 103px; fill: #f7f8fa; }
.chat { height: 1956px; position: relative; display: flex; flex-direction: column; align-items: flex-start; }
.wall { position: absolute; left: 0; top: -1px; z-index: 0; fill: none; stroke: #22282b; stroke-width: 3.200; stroke-linecap: round; stroke-linejoin: round; overflow: hidden; }
.wall path { vector-effect: non-scaling-stroke; }
.wall text { font-size: 46px; font-weight: 700; letter-spacing: 3px; stroke-width: 2.500; }
.today { position: relative; align-self: center; height: 62px; margin-top: -29px; width: 193px; background: #12181b; border-radius: 24px; text-align: center; color: #8c9497; font-size: 42px; line-height: 34px; font-weight: 500; }
.notice { position: relative; box-sizing: border-box; width: 851px; height: 407px; margin: 43px 0 0 115px; padding-top: 23px; border-radius: 30px; background: #12181b; color: #8c9497; font-size: 52px; }
.notice p { margin: 0; height: 61px; line-height: 61px; display: flex; justify-content: center; align-items: center; }
.notice svg { margin: 0 14px 0 0; } .notice strong { margin-left: 12px; font-weight: 700; }
.bubble { position: relative; display: grid; margin-left: 41px; background: #1f272a; border-radius: 38px; }
.bubble.out { align-self: flex-end; margin-right: 40px; background: #144d37; }
.spike { position: absolute; top: 0; left: -23px; transform: scaleX(-1); fill: #1f272a; } .out .spike { left: auto; right: -24px; transform: none; fill: #144d37; }
.body { grid-area: 1 / 1; position: relative; padding: 20px 0 26px 32px; font-size: 60px; }
.line { height: 71px; line-height: 71px; display: flex; } .tall { height: 101px; line-height: 101px; }
.joy { margin: 9px 0 0 11px; }
.meta { grid-area: 1 / 1; position: relative; align-self: end; justify-self: end; display: flex; padding: 0 26px 17px 0; font-size: 47px; line-height: 40px; color: #9b9fa1; }
.out .meta { color: #9fbbae; padding: 0 29px 19px 0; } .ticks { margin: 2px 0 0 15px; fill: none; stroke: #9fbbae; stroke-width: 5; stroke-linecap: round; }
.composer { position: relative; margin: 24px 0 0 16px; display: flex; align-items: center; }
.field { width: 867px; height: 159px; margin-top: 6px; border-radius: 80px; background: #1f272a; display: flex; align-items: center; fill: none; stroke: #8c9497; stroke-width: 7; }
.field > * { margin-top: -2px; }
.smile { margin-left: 46px; } .solid { fill: #8c9497; stroke: none; }
.entry { margin-left: 46px; display: flex; align-items: center; color: #8c9497; font-size: 67px; font-weight: 300; }
.entry i { width: 7px; height: 90px; background: #22c164; margin-right: -7px; }
.entry span { position: relative; line-height: 90px; padding-top: 2px; }
.clip { margin-left: 104px; stroke-linecap: round; } .rupee { margin-left: 108px; } .rupee path { stroke-width: 5; } .camera { margin-left: 94px; }
.mic { width: 162px; height: 162px; margin: -1px 0 0 17px; border-radius: 50%; background: #22c164; display: flex; align-items: center; justify-content: center; fill: #0b1014; }
.mic path { fill: none; stroke: #0b1014; stroke-width: 6.500; stroke-linecap: round; }
.nav { height: 149px; box-sizing: border-box; padding-left: 243px; display: flex; align-items: center; gap: 225px; background: #010203; fill: none; stroke: #606264; stroke-width: 3; }
</style>
